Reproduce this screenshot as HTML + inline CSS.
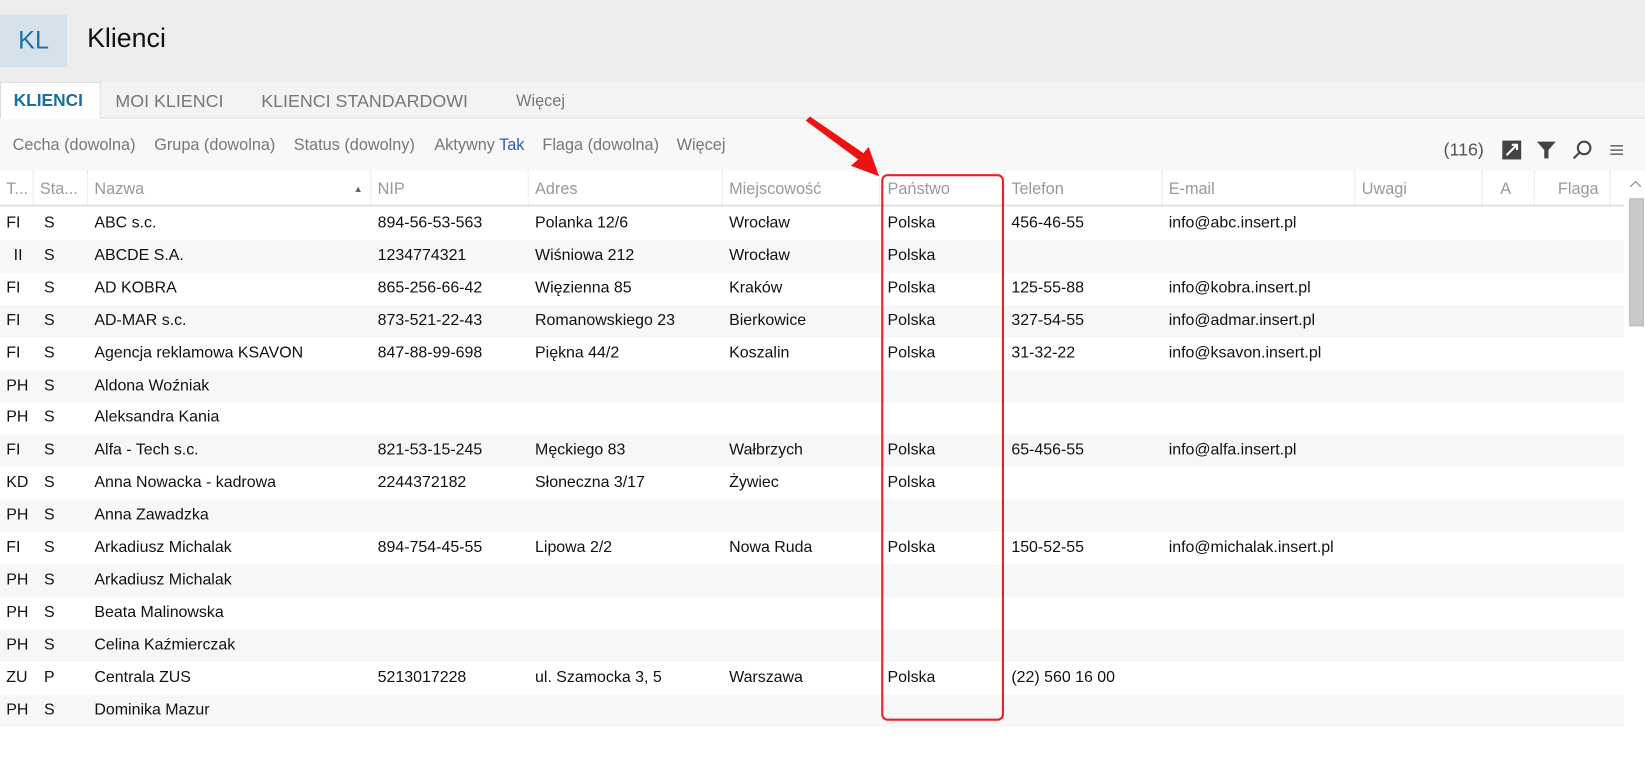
<!DOCTYPE html>
<html><head><meta charset="utf-8"><style>
*{margin:0;padding:0;box-sizing:border-box}
body{width:1645px;height:724px;background:#fff;font-family:"Liberation Sans",sans-serif;overflow:hidden;color:#111}
#wrap{position:absolute;left:0;top:0;width:1568px;height:690px;transform:scale(1.0491);transform-origin:0 0}
.abs{position:absolute;white-space:nowrap}
#hdr{position:absolute;left:0;top:0;width:1568px;height:78px;background:#ededed}
#kl{position:absolute;left:0;top:14px;width:64px;height:50px;background:#d6e2eb;color:#1a6fb0;font-size:24px;line-height:50px;text-align:center}
#tabs{position:absolute;left:0;top:78px;width:1568px;height:35px;background:#f3f3f3;border-bottom:1px solid #ddd}
#filt{position:absolute;left:0;top:113px;width:1568px;height:50px;background:#f8f8f8}
.tab{position:absolute;top:9px;font-size:17px;color:#777}
.f{position:absolute;top:17px;font-size:15.5px;color:#777}
#th{position:absolute;left:0;top:163px;width:1548px;height:34px;background:#fff;border-bottom:2px solid #e4e4e4}
.h{position:absolute;top:9px;font-size:15.5px;color:#999}
.d{position:absolute;top:0;width:0;height:34px;border-left:1px dotted #ddd}
.r{position:absolute;left:0;width:1548px;height:31px;font-size:15.2px}
.r span{position:absolute;top:6px;white-space:nowrap}
.alt{background:#f7f7f7}
</style></head><body><div id="wrap">
<div id="hdr"><div id="kl">KL</div><div class="abs" style="left:83px;top:23px;font-size:25.5px;color:#111">Klienci</div></div>
<div id="tabs">
<div style="position:absolute;left:0;top:0;width:96px;height:36px;background:#fff;border:1px solid #ddd;border-bottom:none"></div>
<div class="tab" style="left:13px;color:#1a6fa0;font-weight:bold;font-size:16.5px">KLIENCI</div>
<div class="tab" style="left:110px">MOI KLIENCI</div>
<div class="tab" style="left:249px">KLIENCI STANDARDOWI</div>
<div class="tab" style="left:492px;font-size:15.5px;top:10px">Więcej</div>
</div>
<div id="filt">
<div class="f" style="left:12px">Cecha (dowolna)</div>
<div class="f" style="left:147px">Grupa (dowolna)</div>
<div class="f" style="left:280px">Status (dowolny)</div>
<div class="f" style="left:414px">Aktywny <span style="color:#2a5fb0">Tak</span></div>
<div class="f" style="left:517px">Flaga (dowolna)</div>
<div class="f" style="left:645px">Więcej</div>
<div class="f" style="left:1376px;font-size:17px;top:20px;color:#555">(116)</div>
<svg class="abs" style="left:1431px;top:20px" width="20" height="20"><rect x="1" y="1" width="18" height="18" fill="#444"/><path d="M5 15L15 5M10 5h5v5" stroke="#fff" stroke-width="2" fill="none"/></svg>
<svg class="abs" style="left:1464px;top:20px" width="20" height="20"><path d="M1 2h18l-7 8v8h-4v-8z" fill="#444"/></svg>
<svg class="abs" style="left:1498px;top:20px" width="20" height="20"><circle cx="12" cy="8" r="6" stroke="#444" stroke-width="2" fill="none"/><path d="M8 12L2 18" stroke="#444" stroke-width="2"/></svg>
<svg class="abs" style="left:1534px;top:24px" width="14" height="12"><path d="M1 2h12M1 6h12M1 10h12" stroke="#555" stroke-width="1.3"/></svg>
</div>
<div id="th">
<div class="h" style="left:6px">T...</div><div class="d" style="left:31px"></div>
<div class="h" style="left:38px">Sta...</div><div class="d" style="left:83px"></div>
<div class="h" style="left:90px">Nazwa</div><div class="abs" style="left:337px;top:12px;font-size:9px;color:#666">▲</div><div class="d" style="left:353px"></div>
<div class="h" style="left:360px">NIP</div><div class="d" style="left:503px"></div>
<div class="h" style="left:510px">Adres</div><div class="d" style="left:688px"></div>
<div class="h" style="left:695px">Miejscowość</div><div class="d" style="left:838px"></div>
<div class="h" style="left:846px">Państwo</div><div class="d" style="left:957px"></div>
<div class="h" style="left:964px">Telefon</div><div class="d" style="left:1107px"></div>
<div class="h" style="left:1114px">E-mail</div><div class="d" style="left:1291px"></div>
<div class="h" style="left:1298px">Uwagi</div><div class="d" style="left:1412px"></div>
<div class="h" style="left:1430px">A</div><div class="d" style="left:1462px"></div>
<div class="h" style="left:1485px">Flaga</div><div class="d" style="left:1534px"></div>
</div>
<div class="abs" style="left:1548px;top:163px;width:22px;height:561px;background:#fff"></div>
<svg class="abs" style="left:1552px;top:170px" width="14" height="10"><path d="M2 8L7 3L12 8" stroke="#999" fill="none" stroke-width="1.3"/></svg>
<div class="abs" style="left:1553px;top:189px;width:14px;height:122px;background:#c8c8c8;border:1px solid #bbb"></div>
<div id="rows"></div>
<div class="abs" style="left:840px;top:166px;width:117px;height:521px;border:2px solid #ee1c24;border-radius:6px"></div>
<svg class="abs" style="left:760px;top:105px" width="90" height="70"><path d="M8 10L12 6L63 41L68 35L78 63L51 53L58 47Z" fill="#ee1111"/></svg>
</div>
<script>
var d=[["FI","S","ABC s.c.","894-56-53-563","Polanka  12/6","Wrocław","Polska","456-46-55","info@abc.insert.pl"],
["II","S","ABCDE S.A.","1234774321","Wiśniowa 212","Wrocław","Polska","",""],
["FI","S","AD KOBRA","865-256-66-42","Więzienna  85","Kraków","Polska","125-55-88","info@kobra.insert.pl"],
["FI","S","AD-MAR s.c.","873-521-22-43","Romanowskiego 23","Bierkowice","Polska","327-54-55","info@admar.insert.pl"],
["FI","S","Agencja reklamowa KSAVON","847-88-99-698","Piękna  44/2","Koszalin","Polska","31-32-22","info@ksavon.insert.pl"],
["PH","S","Aldona Woźniak","","","","","",""],
["PH","S","Aleksandra Kania","","","","","",""],
["FI","S","Alfa - Tech s.c.","821-53-15-245","Męckiego  83","Wałbrzych","Polska","65-456-55","info@alfa.insert.pl"],
["KD","S","Anna Nowacka - kadrowa","2244372182","Słoneczna 3/17","Żywiec","Polska","",""],
["PH","S","Anna Zawadzka","","","","","",""],
["FI","S","Arkadiusz Michalak","894-754-45-55","Lipowa  2/2","Nowa Ruda","Polska","150-52-55","info@michalak.insert.pl"],
["PH","S","Arkadiusz Michalak","","","","","",""],
["PH","S","Beata Malinowska","","","","","",""],
["PH","S","Celina Kaźmierczak","","","","","",""],
["ZU","P","Centrala ZUS","5213017228","ul. Szamocka 3, 5","Warszawa","Polska","(22) 560 16 00",""],
["PH","S","Dominika Mazur","","","","","",""]];
var xs=[6,38,90,360,510,695,846,964,1114],h="";
d.forEach(function(r,i){h+='<div class="r'+(i%2?' alt':'')+'" style="top:'+(198+i*30.9)+'px">';
r.forEach(function(c,j){var x=xs[j];if(j<2){x=j==0?(c=="II"?13:(c.length>1?6:9)):42;}h+='<span style="left:'+x+'px">'+c+'</span>';});h+='</div>';});
document.getElementById('rows').innerHTML=h;
</script>
</body></html>
